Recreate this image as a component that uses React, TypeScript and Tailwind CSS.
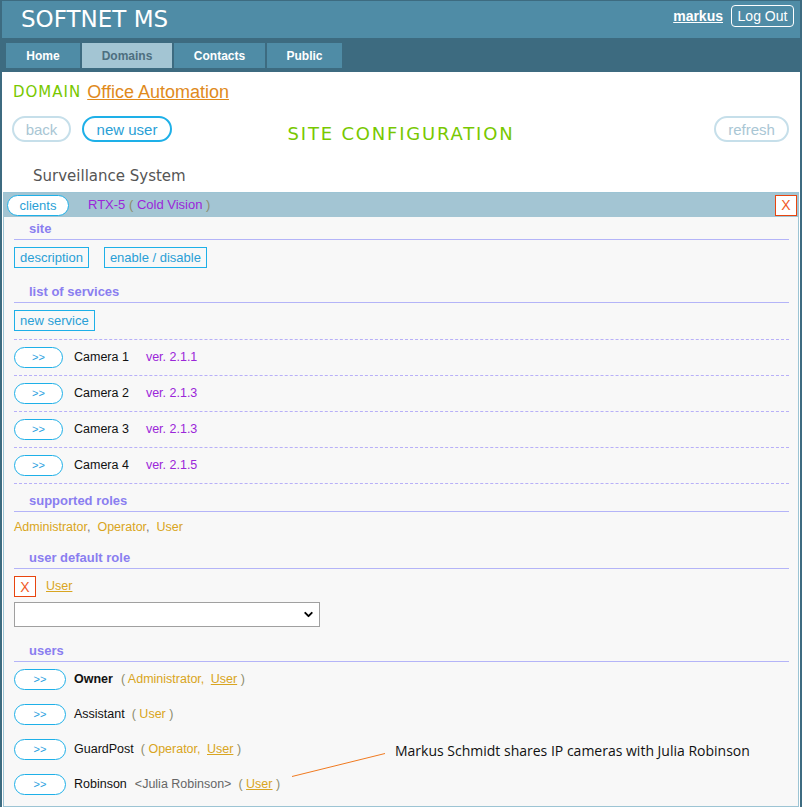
import { ChevronDown } from 'lucide-react';

const navItems = [
  { label: 'Home', width: 'w-[74px]', active: false },
  { label: 'Domains', width: 'w-[90px]', active: true },
  { label: 'Contacts', width: 'w-[91px]', active: false },
  { label: 'Public', width: 'w-[75px]', active: false },
];

const services = [
  { name: 'Camera 1', version: '2.1.1' },
  { name: 'Camera 2', version: '2.1.3' },
  { name: 'Camera 3', version: '2.1.3' },
  { name: 'Camera 4', version: '2.1.5' },
];

const SectionHeading = ({ title, className = '' }: { title: string; className?: string }) => (
  <div className={`h-[23px] pt-[2px] pl-[15px] border-b border-[#b4b4f8] text-[13px] leading-[20px] font-bold text-[#8a7ef0] ${className}`}>
    {title}
  </div>
);

const PillButton = ({ width }: { width: string }) => (
  <button className={`${width} h-[21px] rounded-full border border-[#1eb0e8] bg-white text-[11px] leading-none text-[#2aa0e0]`}>
    &gt;&gt;
  </button>
);

const Paren = ({ children }: { children: string }) => <span className="text-[#8c8c6c]">{children}</span>;

export default function App() {
  return (
    <div
      className="relative w-[802px] h-[807px] overflow-hidden bg-white border-x-2 border-t border-[#3d6b80] text-[12.5px] text-[#111]"
      style={{ fontFamily: '"Liberation Sans", Arial, sans-serif' }}
    >
      {/* Header */}
      <div className="h-[37px] bg-[#4f8ca6] flex items-start justify-between">
        <div
          className="pl-[19px] text-[23px] leading-[36px] text-white"
          style={{ fontFamily: '"DejaVu Sans", Verdana, sans-serif' }}
        >
          SOFTNET MS
        </div>
        <div className="flex items-center pr-[6px] pt-[4px]">
          <a className="text-[14px] font-bold text-white underline">markus</a>
          <button className="ml-[8px] w-[63px] h-[22px] border border-white rounded-[4px] text-[14px] text-white leading-none">
            Log Out
          </button>
        </div>
      </div>

      {/* Nav */}
      <div className="h-[34px] bg-[#3d6b80] flex items-start pt-[5px] pl-[4px] gap-[2px]">
        {navItems.map(item => (
          <div
            key={item.label}
            className={`${item.width} h-[25px] flex items-center justify-center text-[12px] font-bold ${
              item.active ? 'bg-[#a3c5d3] text-[#4d6f80]' : 'bg-[#4f8ca6] text-white'
            }`}
          >
            {item.label}
          </div>
        ))}
      </div>

      {/* Domain */}
      <div className="h-[40px] flex items-center pl-[11px]" style={{ fontFamily: '"DejaVu Sans", Verdana, sans-serif' }}>
        <span className="text-[15px] tracking-[1px] text-[#78c800]">DOMAIN</span>
        <a className="ml-[6px] text-[18px] underline text-[#e08a1c]" style={{ fontFamily: '"Liberation Sans", Arial, sans-serif' }}>
          Office Automation
        </a>
      </div>

      {/* Toolbar */}
      <div className="grid grid-cols-[1fr_auto_1fr] items-start h-[26px] mt-[4px]">
        <div className="flex pl-[10px] gap-[11px]">
          <button className="w-[59px] h-[26px] rounded-full border-2 border-[#c6dfea] text-[15px] leading-none text-[#a9c6d4]">
            back
          </button>
          <button className="w-[90px] h-[26px] rounded-full border-2 border-[#1eb0e8] text-[15px] leading-none text-[#2a9fd6]">
            new user
          </button>
        </div>
        <div
          className="pt-[9px] text-[18px] leading-[17px] tracking-[1.8px] text-[#78c800]"
          style={{ fontFamily: '"DejaVu Sans", Verdana, sans-serif' }}
        >
          SITE CONFIGURATION
        </div>
        <div className="flex justify-end pr-[11px]">
          <button className="w-[75px] h-[26px] rounded-full border-2 border-[#c6dfea] text-[15px] leading-none text-[#a9c6d4]">
            refresh
          </button>
        </div>
      </div>

      <div
        className="mt-[24px] mb-[6px] pl-[31px] text-[15px] leading-[20px] text-[#555]"
        style={{ fontFamily: '"DejaVu Sans", Verdana, sans-serif' }}
      >
        Surveillance System
      </div>

      {/* Site panel */}
      <div className="mx-[1px] border border-[#9cc4d4]">
        <div className="h-[24px] bg-[#a3c5d3] flex items-center pl-[3px] pr-[1px]">
          <button className="w-[62px] h-[21px] rounded-full border border-[#1eb0e8] bg-white text-[13px] leading-none text-[#2a9fd6]">
            clients
          </button>
          <span className="ml-[19px] text-[13px] text-[#9b26d9]">
            RTX-5 <Paren>(</Paren> Cold Vision <Paren>)</Paren>
          </span>
          <button className="ml-auto w-[22px] h-[21px] border border-[#e8450f] bg-white text-[14px] leading-none text-[#f05a28]">
            X
          </button>
        </div>

        <div className="bg-[#f8f8f8] pl-[10px] pr-[9px] pb-[4px]">
          <SectionHeading title="site" />
          <div className="flex gap-[15px] mt-[7px]">
            <button className="h-[21px] px-[5px] border border-[#1eb0e8] text-[13px] leading-none text-[#2a9fd6]">
              description
            </button>
            <button className="h-[21px] px-[5px] border border-[#1eb0e8] text-[13px] leading-none text-[#2a9fd6]">
              enable / disable
            </button>
          </div>

          <SectionHeading title="list of services" className="mt-[12px]" />
          <button className="mt-[7px] h-[21px] px-[5px] border border-[#1eb0e8] text-[13px] leading-none text-[#2a9fd6]">
            new service
          </button>
          <div className="mt-[8px] border-t border-dashed border-[#b8b0f8]">
            {services.map(s => (
              <div key={s.name} className="h-[36px] flex items-center border-b border-dashed border-[#b8b0f8]">
                <PillButton width="w-[49px]" />
                <span className="ml-[11px]">{s.name}</span>
                <span className="ml-[17px] text-[#9b26d9]">ver. {s.version}</span>
              </div>
            ))}
          </div>

          <SectionHeading title="supported roles" className="mt-[5px]" />
          <div className="mt-[5px] leading-[20px] text-[#d9a521]">
            Administrator<span className="text-[#777]">,</span>
            <span className="ml-[7px]">Operator</span>
            <span className="text-[#777]">,</span>
            <span className="ml-[7px]">User</span>
          </div>

          <SectionHeading title="user default role" className="mt-[9px]" />
          <div className="flex items-center mt-[7px]">
            <button className="w-[22px] h-[21px] border border-[#e8450f] bg-white text-[14px] leading-none text-[#f05a28]">
              X
            </button>
            <a className="ml-[10px] underline text-[#d9a521]">User</a>
          </div>
          <div className="relative mt-[5px] w-[306px] h-[25px]">
            <select className="appearance-none w-full h-full bg-white border border-[#a0a0a0]" />
            <ChevronDown className="absolute right-[5px] top-[6px] w-[13px] h-[13px] text-black pointer-events-none" strokeWidth={3.5} />
          </div>

          <SectionHeading title="users" className="mt-[12px]" />
          <div className="h-[35px] flex items-center">
            <PillButton width="w-[52px]" />
            <span className="ml-[8px] font-bold">Owner</span>
            <span className="ml-[8px] text-[#d9a521]">
              <Paren>(</Paren> Administrator, <a className="ml-[3px] underline">User</a> <Paren>)</Paren>
            </span>
          </div>
          <div className="h-[35px] flex items-center">
            <PillButton width="w-[52px]" />
            <span className="ml-[8px]">Assistant</span>
            <span className="ml-[7px] text-[#d9a521]">
              <Paren>(</Paren> User <Paren>)</Paren>
            </span>
          </div>
          <div className="h-[35px] flex items-center">
            <PillButton width="w-[52px]" />
            <span className="ml-[8px]">GuardPost</span>
            <span className="ml-[7px] text-[#d9a521]">
              <Paren>(</Paren> Operator, <a className="ml-[3px] underline">User</a> <Paren>)</Paren>
            </span>
          </div>
          <div className="h-[35px] flex items-center">
            <PillButton width="w-[52px]" />
            <span className="ml-[8px]">Robinson</span>
            <span className="ml-[8px] text-[#666]">&lt;Julia Robinson&gt;</span>
            <span className="ml-[7px] text-[#d9a521]">
              <Paren>(</Paren> <a className="underline">User</a> <Paren>)</Paren>
            </span>
          </div>
        </div>
      </div>

      {/* Annotation */}
      <svg className="absolute left-[288px] top-[751px] w-[98px] h-[28px] pointer-events-none" viewBox="0 0 98 28">
        <line x1="2" y1="24.5" x2="95" y2="1.5" stroke="#f07a20" strokeWidth="1" />
      </svg>
      <div
        className="absolute left-[393px] top-[740px] text-[14px] leading-[20px] text-[#111] whitespace-nowrap"
        style={{ fontFamily: '"Open Sans", "Noto Sans", sans-serif' }}
      >
        Markus Schmidt shares IP cameras with Julia Robinson
      </div>
    </div>
  );
}
